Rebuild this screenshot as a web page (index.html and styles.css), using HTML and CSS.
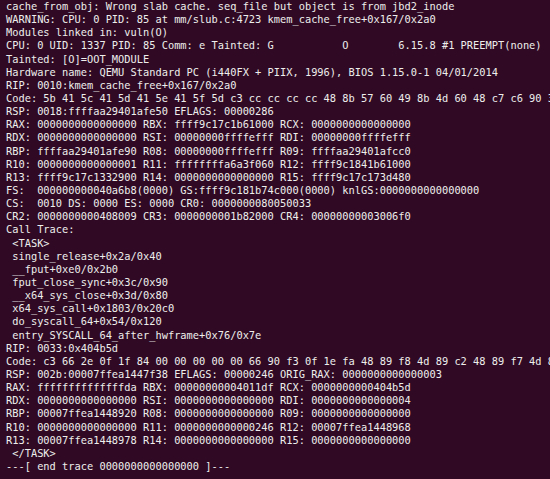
FILE: index.html
```html
<!DOCTYPE html>
<html>
<head>
<meta charset="utf-8">
<link rel="stylesheet" href="styles.css">
</head>
<body>
<pre class="term">cache_from_obj: Wrong slab cache. seq_file but object is from jbd2_inode
WARNING: CPU: 0 PID: 85 at mm/slub.c:4723 kmem_cache_free+0x167/0x2a0
Modules linked in: vuln(O)
CPU: 0 UID: 1337 PID: 85 Comm: e Tainted: G           O        6.15.8 #1 PREEMPT(none)
Tainted: [O]=OOT_MODULE
Hardware name: QEMU Standard PC (i440FX + PIIX, 1996), BIOS 1.15.0-1 04/01/2014
RIP: 0010:kmem_cache_free+0x167/0x2a0
Code: 5b 41 5c 41 5d 41 5e 41 5f 5d c3 cc cc cc cc 48 8b 57 60 49 8b 4d 60 48 c7 c6 90 3d
RSP: 0018:ffffaa29401afe50 EFLAGS: 00000286
RAX: 0000000000000000 RBX: ffff9c17c1b61000 RCX: 0000000000000000
RDX: 0000000000000000 RSI: 00000000ffffefff RDI: 00000000ffffefff
RBP: ffffaa29401afe90 R08: 00000000ffffefff R09: ffffaa29401afcc0
R10: 0000000000000001 R11: ffffffffa6a3f060 R12: ffff9c1841b61000
R13: ffff9c17c1332900 R14: 0000000000000000 R15: ffff9c17c173d480
FS:  000000000040a6b8(0000) GS:ffff9c181b74c000(0000) knlGS:0000000000000000
CS:  0010 DS: 0000 ES: 0000 CR0: 0000000080050033
CR2: 0000000000408009 CR3: 0000000001b82000 CR4: 00000000003006f0
Call Trace:
 &lt;TASK&gt;
 single_release+0x2a/0x40
 __fput+0xe0/0x2b0
 fput_close_sync+0x3c/0x90
 __x64_sys_close+0x3d/0x80
 x64_sys_call+0x1803/0x20c0
 do_syscall_64+0x54/0x120
 entry_SYSCALL_64_after_hwframe+0x76/0x7e
RIP: 0033:0x404b5d
Code: c3 66 2e 0f 1f 84 00 00 00 00 00 66 90 f3 0f 1e fa 48 89 f8 4d 89 c2 48 89 f7 4d 89
RSP: 002b:00007ffea1447f38 EFLAGS: 00000246 ORIG_RAX: 0000000000000003
RAX: ffffffffffffffda RBX: 00000000004011df RCX: 0000000000404b5d
RDX: 0000000000000000 RSI: 0000000000000000 RDI: 0000000000000004
RBP: 00007ffea1448920 R08: 0000000000000000 R09: 0000000000000000
R10: 0000000000000000 R11: 0000000000000246 R12: 00007ffea1448968
R13: 00007ffea1448978 R14: 0000000000000000 R15: 0000000000000000
 &lt;/TASK&gt;
---[ end trace 0000000000000000 ]---</pre>
</body>
</html>
```
FILE: styles.css
```css
html, body {
  margin: 0;
  padding: 0;
  background: #300a24;
  width: 550px;
  height: 479px;
  overflow: hidden;
}
.term {
  margin: 0;
  padding: 0 0 0 6px;
  font-family: "DejaVu Sans Mono", monospace;
  font-size: 10.35px;
  line-height: 13.14px;
  color: #eeeeec;
  white-space: pre;
  overflow: hidden;
}
```
